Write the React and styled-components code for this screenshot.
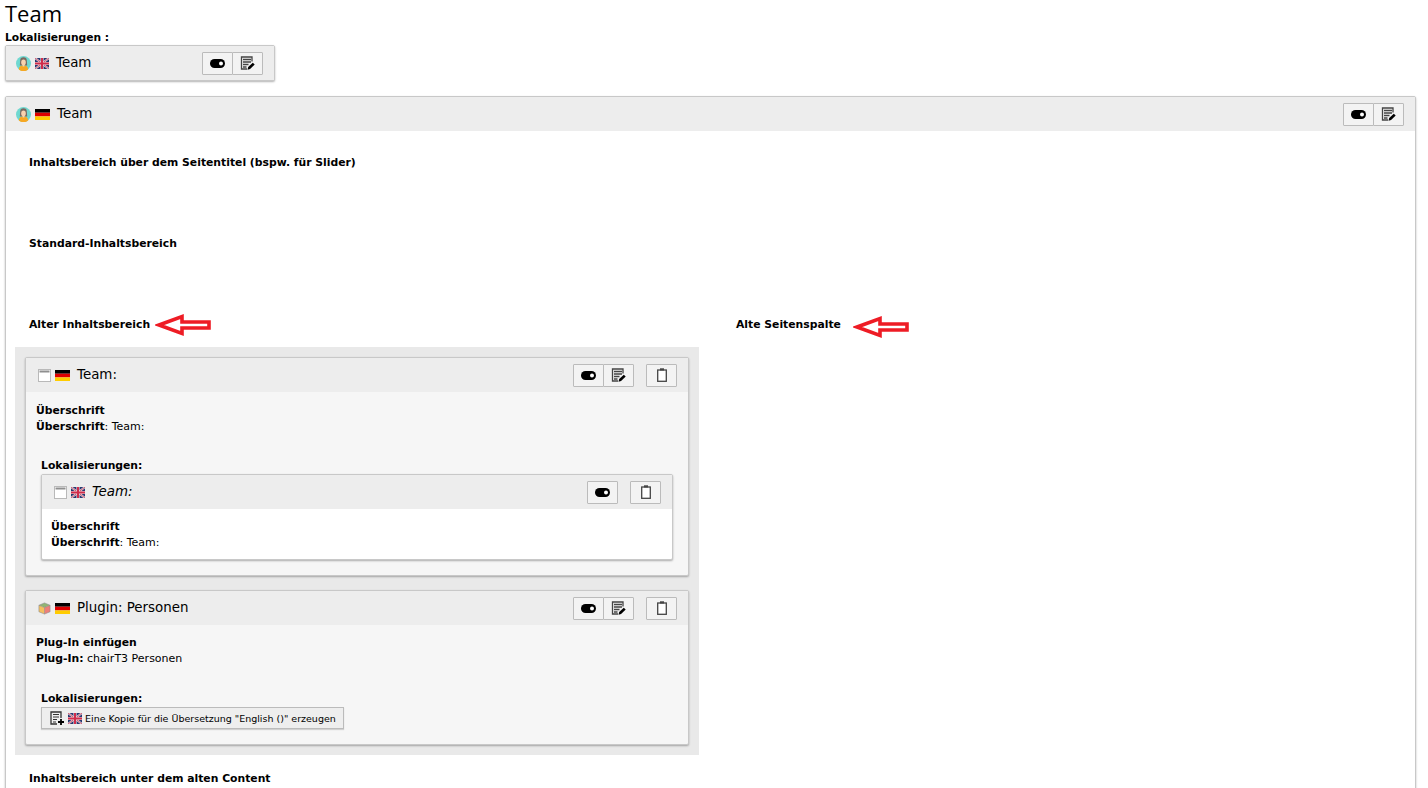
import React from "react";
import styled, { createGlobalStyle } from "styled-components";

const GlobalStyle = createGlobalStyle`
  html, body {
    margin: 0;
    height: 788px;
    overflow: hidden;
    background: #fff;
  }
  body {
    font-family: "DejaVu Sans", Verdana, sans-serif;
    font-size: 11px;
    color: #000;
  }
`;

const Page = styled.div`
  padding: 0 12px 0 5px;
`;

const PageTitle = styled.h1`
  margin: 0 0 4px;
  font-family: "Open Sans", sans-serif;
  font-size: 22px;
  font-weight: 400;
  line-height: 26px;
`;

const Strong = styled.div`
  font-size: 10.8px;
  font-weight: 700;
  line-height: 16px;
`;

const PageLabel = styled(Strong)`
  font-size: 10.7px;
  line-height: 15px;
`;

const Bold = styled.b`
  font-size: 10.8px;
`;

const Panel = styled.section`
  box-sizing: border-box;
  width: ${(p) => p.$width || "auto"};
  margin: ${(p) => p.$margin || "0"};
  padding-bottom: ${(p) => p.$bottom || "0"};
  border: 1px solid #c8c8c8;
  border-radius: 2px;
  background: ${(p) => p.$bg || "#fff"};
  box-shadow: 0 1px 2px rgba(0, 0, 0, 0.3);
`;

const PanelHead = styled.header`
  display: flex;
  align-items: center;
  height: 34px;
  padding: 0 11px 0 10px;
  background: #ededed;
`;

const HeadIcons = styled.span`
  display: flex;
  align-items: center;
  gap: 4px;
  margin-right: 7px;
`;

const HeadTitle = styled.span`
  flex: 1;
  padding-bottom: 1px;
  font-family: "DejaVu Sans", sans-serif;
  font-size: 13.4px;
  font-style: ${(p) => (p.$italic ? "italic" : "normal")};
`;

const BtnGroup = styled.div`
  display: flex;
  margin-left: ${(p) => p.$gap || "0"};
`;

const IconBtn = styled.button`
  display: flex;
  align-items: center;
  justify-content: center;
  width: 31px;
  height: 23px;
  padding: 0;
  border: 1px solid #bbb;
  margin-left: -1px;
  background: #f3f3f3;
  border-radius: 1px;
`;

const Columns = styled.div`
  display: grid;
  grid-template-columns: 730px 1fr;
`;

const AreaTitle = styled.div`
  display: flex;
  align-items: center;
  height: 16px;
  padding-left: ${(p) => p.$left ?? 23}px;
  font-size: 10.8px;
  font-weight: 700;
  margin-top: ${(p) => p.$top || "0"};
`;

const DropArea = styled.div`
  width: 684px;
  box-sizing: border-box;
  margin: 15px 0 0 9px;
  padding: 10px;
  background: #e9e9e9;
`;

const CardBody = styled.div`
  padding: ${(p) => p.$pad || "11px 10px 0"};
`;

const Line = styled.div`
  line-height: 16px;
`;

const Localized = styled.div`
  padding: ${(p) => p.$top}px 15px 15px;
`;

const CopyButton = styled.button`
  display: flex;
  align-items: center;
  gap: 3px;
  height: 22px;
  padding: 0 7px 0 8px;
  border: 1px solid #bbb;
  background: #eee;
  font-family: inherit;
  font-size: 9.5px;
  color: #000;
  box-shadow: 0 1px 1px rgba(0, 0, 0, 0.15);
`;

const UkFlag = () => (
  <svg width="14" height="11" viewBox="0 0 14 11">
    <rect width="14" height="11" fill="#27386f" />
    <path d="M0 0l14 11M14 0L0 11" stroke="#e6d8de" strokeWidth="2" />
    <path d="M0 0l14 11M14 0L0 11" stroke="#c93a55" strokeWidth="0.8" />
    <path d="M7 0v11M0 5.5h14" stroke="#e6d8de" strokeWidth="3.2" />
    <path d="M7 0v11M0 5.5h14" stroke="#d02c4b" strokeWidth="2" />
  </svg>
);

const DeFlag = () => (
  <svg width="15" height="11" viewBox="0 0 15 11">
    <rect width="15" height="3.7" fill="#000" />
    <rect y="3.7" width="15" height="3.7" fill="#d00" />
    <rect y="7.4" width="15" height="3.6" fill="#fc0" />
  </svg>
);

const AvatarIcon = () => (
  <svg width="15" height="15" viewBox="0 0 15 15">
    <circle cx="7.5" cy="7.5" r="7.5" fill="#6fd8d0" />
    <path d="M4.2 4.5a3.3 3.3 0 0 1 6.6 0l.4 5H3.8z" fill="#7a6a60" />
    <path d="M2.8 13.4c.3-3 2-3.9 4.7-3.9s4.4.9 4.7 3.9a7.5 7.5 0 0 1-9.4 0z" fill="#f7a823" />
    <ellipse cx="7.5" cy="6.4" rx="2.3" ry="2.8" fill="#f8d2ad" />
    <rect x="6.6" y="8.5" width="1.8" height="2" fill="#f8d2ad" />
  </svg>
);

const ContentMark = styled.svg`
  margin-left: 2px;
`;

const ContentIcon = () => (
  <ContentMark width="13" height="13" viewBox="0 0 13 13">
    <rect x="0.5" y="0.5" width="12" height="12" fill="#fff" stroke="#b9b9b9" />
    <rect x="1.5" y="1.5" width="10" height="2" fill="#8f8f8f" />
  </ContentMark>
);

const PluginIcon = () => (
  <ContentMark width="13" height="13" viewBox="0 0 14 14">
    <path d="M1 3.5L7 1l6 2.5L7 6z" fill="#8fb573" />
    <path d="M1 3.5L7 6v7L1 10.5z" fill="#f4bf5f" />
    <path d="M13 3.5L7 6v7l6-2.5z" fill="#ee7f78" />
    <path d="M1 3.5L7 1l6 2.5v7L7 13l-6-2.5zM7 6v7M1 3.5L7 6l6-2.5" fill="none" stroke="#8a8a8a" strokeWidth="0.6" />
  </ContentMark>
);

const ToggleIcon = () => (
  <svg width="15" height="9" viewBox="0 0 15 9">
    <rect width="15" height="9" rx="4.5" fill="#000" />
    <circle cx="11" cy="4.5" r="2" fill="#fff" />
  </svg>
);

const EditIcon = () => (
  <svg width="15" height="14" viewBox="0 0 15 14">
    <path d="M12 5.5V1H1.5v12H7" fill="none" stroke="#444" strokeWidth="1.3" />
    <path d="M3 3.5h8M3 6h8M3 8.5h5.5M3 11h3.5" stroke="#444" strokeWidth="1.3" />
    <path d="M7.5 13.8l.7-2.7 4.6-4.4 1.9 1.9-4.6 4.5z" fill="#000" />
  </svg>
);

const ClipboardIcon = () => (
  <svg width="10" height="14" viewBox="0 0 10 14">
    <rect x="0.7" y="2" width="8.6" height="11.3" fill="#fff" stroke="#444" strokeWidth="1.3" />
    <rect x="3" y="0.3" width="4" height="2.2" fill="#444" />
  </svg>
);

const NewRecordIcon = () => (
  <svg width="15" height="14" viewBox="0 0 15 14">
    <path d="M11 7V1H1v12h6" fill="none" stroke="#333" strokeWidth="1.3" />
    <path d="M3 3.5h6M3 6h6M3 8.5h4M3 11h3" stroke="#333" strokeWidth="1.2" />
    <path d="M11 8v6M8 11h6" stroke="#000" strokeWidth="1.8" />
  </svg>
);

const RedArrow = styled.svg`
  flex: none;
  margin-left: ${(p) => p.$gap}px;
  transform: translateY(${(p) => p.$shift}px);
`;

const Arrow = ({ gap, shift }) => (
  <RedArrow $gap={gap} $shift={shift} width="56" height="24" viewBox="0 0 56 24">
    <path d="M4 12L27 3.5V9h27v6H27v5.5z" fill="#fff" stroke="#ee1c25" strokeWidth="3.6" />
  </RedArrow>
);

const Actions = ({ edit = true, paste = false }) => (
  <>
    <BtnGroup>
      <IconBtn><ToggleIcon /></IconBtn>
      {edit && <IconBtn><EditIcon /></IconBtn>}
    </BtnGroup>
    {paste && (
      <BtnGroup $gap="13px">
        <IconBtn><ClipboardIcon /></IconBtn>
      </BtnGroup>
    )}
  </>
);

const App = () => (
  <>
    <GlobalStyle />
    <Page>
      <PageTitle>Team</PageTitle>
      <PageLabel>Lokalisierungen :</PageLabel>

      <Panel $width="270px" $bg="#ededed">
        <PanelHead>
          <HeadIcons><AvatarIcon /><UkFlag /></HeadIcons>
          <HeadTitle>Team</HeadTitle>
          <Actions />
        </PanelHead>
      </Panel>

      <Panel $margin="15px 0 0" $bottom="40px">
        <PanelHead>
          <HeadIcons><AvatarIcon /><DeFlag /></HeadIcons>
          <HeadTitle>Team</HeadTitle>
          <Actions />
        </PanelHead>

        <AreaTitle $top="23px">Inhaltsbereich über dem Seitentitel (bspw. für Slider)</AreaTitle>
        <AreaTitle $top="65px">Standard-Inhaltsbereich</AreaTitle>

        <Columns>
          <div>
            <AreaTitle $top="65px">Alter Inhaltsbereich<Arrow gap={5} shift={1} /></AreaTitle>
            <DropArea>
              <Panel $bg="#f6f6f6">
                <PanelHead>
                  <HeadIcons><ContentIcon /><DeFlag /></HeadIcons>
                  <HeadTitle>Team:</HeadTitle>
                  <Actions paste />
                </PanelHead>
                <CardBody>
                  <Strong>Überschrift</Strong>
                  <Line><Bold>Überschrift</Bold>: Team:</Line>
                </CardBody>
                <Localized $top={23}>
                  <Strong>Lokalisierungen:</Strong>
                  <Panel>
                    <PanelHead>
                      <HeadIcons><ContentIcon /><UkFlag /></HeadIcons>
                      <HeadTitle $italic>Team:</HeadTitle>
                      <Actions edit={false} paste />
                    </PanelHead>
                    <CardBody $pad="10px 9px 8px">
                      <Strong>Überschrift</Strong>
                      <Line><Bold>Überschrift</Bold>: Team:</Line>
                    </CardBody>
                  </Panel>
                </Localized>
              </Panel>

              <Panel $bg="#f6f6f6" $margin="14px 0 0">
                <PanelHead>
                  <HeadIcons><PluginIcon /><DeFlag /></HeadIcons>
                  <HeadTitle>Plugin: Personen</HeadTitle>
                  <Actions paste />
                </PanelHead>
                <CardBody $pad="10px 10px 0">
                  <Strong>Plug-In einfügen</Strong>
                  <Line><Bold>Plug-In:</Bold> chairT3 Personen</Line>
                </CardBody>
                <Localized $top={24}>
                  <Strong>Lokalisierungen:</Strong>
                  <CopyButton>
                    <NewRecordIcon /><UkFlag />
                    Eine Kopie für die Übersetzung "English ()" erzeugen
                  </CopyButton>
                </Localized>
              </Panel>
            </DropArea>
          </div>
          <div>
            <AreaTitle $top="65px" $left={0}>Alte Seitenspalte<Arrow gap={12} shift={3} /></AreaTitle>
          </div>
        </Columns>

        <AreaTitle $top="15px">Inhaltsbereich unter dem alten Content</AreaTitle>
      </Panel>
    </Page>
  </>
);

export default App;
